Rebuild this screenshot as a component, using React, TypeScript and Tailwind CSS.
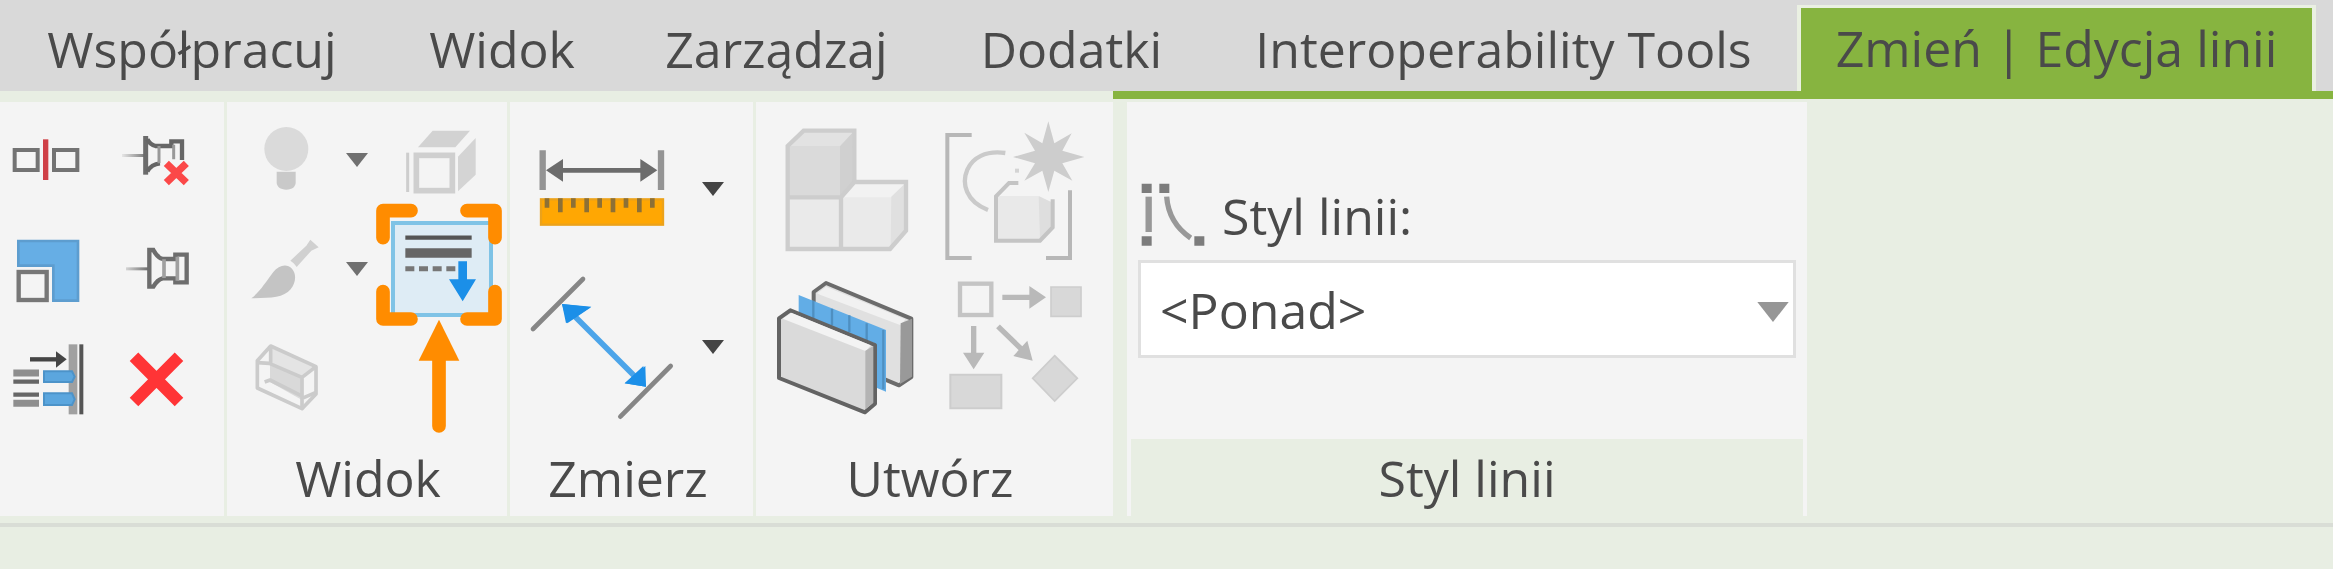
import type { ReactNode } from "react";

const tabs = [
  { name: "Współpracuj", width: "w-[384px]" },
  { name: "Widok", width: "w-[236px]" },
  { name: "Zarządzaj", width: "w-[313px]" },
  { name: "Dodatki", width: "w-[277px]" },
  { name: "Interoperability Tools", width: "w-[587px]" },
];

function Caret({ className }: { className: string }) {
  return (
    <svg viewBox="0 0 22 14" className={className} fill="currentColor" aria-hidden="true">
      <path d="M0 0h22L11 14z" />
    </svg>
  );
}

function Tool({ label, viewBox, size, children }: { label: string; viewBox: string; size: string; children: ReactNode }) {
  return (
    <button type="button" aria-label={label} className={size}>
      <svg viewBox={viewBox} className="h-full w-full" fill="none" aria-hidden="true">
        {children}
      </svg>
    </button>
  );
}

function MenuButton({ label, color }: { label: string; color: string }) {
  return (
    <button type="button" aria-label={label} className={`flex h-14 items-center justify-center ${color}`}>
      <Caret className="h-[14px] w-[22px]" />
    </button>
  );
}

function Panel({ title, className, children }: { title?: string; className: string; children: ReactNode }) {
  return (
    <section className={`flex flex-col justify-between bg-[#f4f4f4] ${className}`}>
      {children}
      <h2 className="flex h-[77px] items-center justify-center">{title}</h2>
    </section>
  );
}

function ModifyPanel() {
  return (
    <Panel className="border-r-3 border-[#e8eee3] pl-[6px] pr-[26px]">
      <div className="grid grid-cols-2 gap-x-6 gap-y-[25px] pt-4">
        <Tool label="Podziel" viewBox="18 24 252 252" size="size-[84px]">
          <rect x="44" y="120" width="69" height="60" stroke="#737373" strokeWidth="12" />
          <rect x="162" y="120" width="70" height="60" stroke="#737373" strokeWidth="12" />
          <path d="M137 88v122" stroke="#cf4046" strokeWidth="16" />
        </Tool>
        <Tool label="Odepnij" viewBox="342 24 252 252" size="size-[84px]">
          <defs>
            <linearGradient id="pin-needle" x1="366" x2="450" y1="0" y2="0" gradientUnits="userSpaceOnUse">
              <stop offset="0" stopColor="#666" stopOpacity="0.1" />
              <stop offset="1" stopColor="#666" />
            </linearGradient>
          </defs>
          <path d="M366 132h66v9h-66z" fill="url(#pin-needle)" />
          <path d="M437 78v116" stroke="#6b6b6b" strokeWidth="15" />
          <path d="M442 88c6 12 14 18 24 20h48V94h32v56M442 184c8-14 18-22 38-24" stroke="#666" strokeWidth="13" />
          <path d="M477 108v52M521 104v44" stroke="#999" strokeWidth="9" />
          <path d="M499 160l60 58M559 160l-60 58" stroke="#fb4848" strokeWidth="22" />
        </Tool>
        <Tool label="Skala" viewBox="18 351 252 252" size="size-[84px]">
          <path d="M55 393h179v179h-74V467H55z" fill="#66aee5" stroke="#5d9dcf" strokeWidth="8" />
          <rect x="56" y="486" width="84" height="84" stroke="#777" strokeWidth="13" />
        </Tool>
        <Tool label="Przypnij" viewBox="342 351 252 252" size="size-[84px]">
          <path d="M378 472h70v9h-70z" fill="url(#pin-needle)" />
          <path d="M448 420v110h12c8-14 16-22 28-25h38v12h34V434h-34v13h-38c-12-3-20-12-28-27z" stroke="#6d6d6d" strokeWidth="13" />
          <path d="M492 448v56M532 440v72" stroke="#a0a0a0" strokeWidth="11" />
        </Tool>
        <Tool label="Utnij/Wydłuż" viewBox="18 678 252 252" size="size-[84px]">
          <path d="M90 748h84" stroke="#454545" strokeWidth="13" />
          <path d="M168 724l32 24-32 25z" fill="#454545" />
          <path d="M206 703h26v210h-26z" fill="#a0a0a0" />
          <path d="M244 703v210" stroke="#555" strokeWidth="12" />
          <path d="M40 789h77M40 880h77" stroke="#8e8e8e" strokeWidth="21" />
          <path d="M40 815h77M40 854h77" stroke="#666" strokeWidth="13" />
          <path d="M132 784h84l8 16-8 16h-84zM132 850h84l8 18-8 17h-84z" fill="#5ba6de" stroke="#4c93c9" strokeWidth="6" />
        </Tool>
        <Tool label="Usuń" viewBox="342 678 252 252" size="size-[84px]">
          <path d="M402 740l135 136M537 740L402 876" stroke="#ff3436" strokeWidth="36" />
        </Tool>
      </div>
    </Panel>
  );
}

function HighlightMarks() {
  return (
    <svg
      viewBox="468 342 378 693"
      className="pointer-events-none absolute -left-[19px] -top-[22px] h-[231px] w-[126px] max-w-none"
      fill="none"
      aria-hidden="true"
    >
      <g stroke="#ff8c00" strokeWidth="41" strokeLinecap="round" strokeLinejoin="round">
        <path d="M489 446v-81h84M741 365h84v81M489 608v82h84M741 690h84v-82M657 800v211" />
      </g>
      <path d="M657 692l61 123H596z" fill="#ff8c00" />
    </svg>
  );
}

function ViewPanel() {
  return (
    <Panel title="Widok" className="border-r-3 border-[#e8eee3] pl-4 pr-[14px]">
      <div className="grid auto-rows-[84px] grid-cols-[84px_28px_106px] items-center gap-x-4 gap-y-[25px] pt-4">
        <Tool label="Ukryj w widoku" viewBox="69 84 252 252" size="size-[84px]">
          <circle cx="199" cy="177" r="66" fill="#dadada" />
          <path d="M170 245h57v32c0 14-10 22-28 22s-29-8-29-22z" fill="#c9c9c9" />
        </Tool>
        <MenuButton label="Opcje ukrywania" color="text-[#707070]" />
        <Tool label="Bryła wyboru" viewBox="513 84 306 252" size="h-[84px] w-[102px] justify-self-end">
          <path d="M563 188v118" stroke="#cdcdcd" strokeWidth="9" />
          <rect x="589" y="196" width="108" height="106" stroke="#cfcfcf" strokeWidth="17" />
          <path d="M594 172l44-50h112l-44 50z" fill="#d2d2d2" />
          <path d="M714 200l53-56v110l-53 50z" fill="#d4d4d4" />
        </Tool>

        <Tool label="Zastąp grafikę" viewBox="69 411 252 252" size="size-[84px]">
          <path d="M94 625c26-20 44-50 66-79 16-20 40-26 56-10 14 16 12 42-4 62-22 26-60 26-118 27z" fill="#c4c4c4" />
          <path d="M211 512l48-45 12-18 25 23-22 10-44 49c-6-10-12-14-19-19z" fill="#d0d0d0" />
        </Tool>
        <MenuButton label="Opcje grafiki" color="text-[#707070]" />
        <button
          type="button"
          aria-label="Grubość linii"
          aria-pressed="true"
          className="relative h-[96px] w-[102px] justify-self-end border-4 border-[#7fc3e6] bg-[#deecf5]"
        >
          <svg viewBox="525 405 282 264" className="h-full w-full" fill="none" aria-hidden="true">
            <path d="M556 443h199" stroke="#555" strokeWidth="13" />
            <path d="M556 489h199" stroke="#666" strokeWidth="28" />
            <path d="M556 536h150" stroke="#777" strokeWidth="15" strokeDasharray="27 14" />
            <path d="M715 514h26v54h27l-40 66-41-66h28z" fill="#1b8fe8" />
          </svg>
          <HighlightMarks />
        </button>

        <Tool label="Przekrój 3D" viewBox="69 738 252 252" size="size-[84px]">
          <path d="M150 800l96 58v72l-96-54z" fill="#d9d9d9" />
          <path d="M152 768l136 62-42 32-94-42z" fill="#e4e4e4" />
          <g stroke="#cbcbcb" strokeWidth="11" strokeLinejoin="round">
            <path d="M152 768l136 62v82l-42 44-134-62v-82z" />
            <path d="M112 818l36 2 98 42 42-32M152 768v52M246 862v94M134 876l16-6 92 46M246 925l42-18" />
          </g>
        </Tool>
      </div>
    </Panel>
  );
}

function MeasurePanel() {
  return (
    <Panel title="Zmierz" className="border-r-3 border-[#e8eee3] pl-[17px] pr-6">
      <div className="grid grid-cols-[150px_32px] items-center gap-x-5 gap-y-2 pt-3">
        <Tool label="Zmierz odległość" viewBox="81 72 450 450" size="size-[150px]">
          <path d="M128 181v119M483 181v119" stroke="#949494" strokeWidth="19" />
          <path d="M170 241h270" stroke="#6c6c6c" strokeWidth="14" />
          <path d="M138 241l51-34v68zM472 241l-51-34v68z" fill="#6c6c6c" />
          <rect x="123" y="328" width="366" height="76" fill="#ffa703" stroke="#eca21a" strokeWidth="7" />
          <path d="M141 325v28M220 325v28M299 325v28M378 325v28M457 325v28" stroke="#8d7036" strokeWidth="14" />
          <path d="M181 325v42M260 325v42M339 325v42M418 325v42" stroke="#8d7036" strokeWidth="14" />
        </Tool>
        <MenuButton label="Opcje pomiaru" color="text-[#444]" />
        <Tool label="Wymiar wyrównany" viewBox="81 546 450 450" size="size-[150px]">
          <path d="M99 717l150-150M361 980l151-152" stroke="#868686" strokeWidth="14" strokeLinecap="round" />
          <path d="M215 670l195 195" stroke="#4ba4e9" strokeWidth="17" />
          <path d="M186 642l87 10-71 48zM438 890l-64-10 62-52z" fill="#1b8fe8" />
          <path d="M186 642l12 58 76-50zM438 890l-8-62-56 52z" fill="#1b8fe8" />
        </Tool>
        <MenuButton label="Opcje wymiaru" color="text-[#444]" />
      </div>
    </Panel>
  );
}

function CreatePanel() {
  return (
    <Panel title="Utwórz" className="pl-[15px] pr-6">
      <div className="grid grid-cols-2 gap-x-[18px] gap-y-2 pt-3">
        <Tool label="Utwórz części" viewBox="33 12 450 450" size="size-[150px]">
          <path d="M83 108l48-46h152v154h155v146l-48 55H83z" fill="#eaeaea" />
          <path d="M83 108h158v154H83z" fill="#dadada" />
          <path d="M83 108l48-46h152l-44 46z" fill="#e2e2e2" />
          <path d="M240 108l43-46v154l-43 46z" fill="#d0d0d0" />
          <path d="M245 262l44-44h149l-44 44z" fill="#f2f2f2" />
          <path d="M394 260l44-42v144l-46 52z" fill="#e0e0e0" />
          <path d="M83 108l48-46h152v154h155v146l-48 55H83zM83 262h160v155M243 262l40-46" stroke="#cdcdcd" strokeWidth="13" />
        </Tool>
        <Tool label="Utwórz grupę" viewBox="537 12 450 450" size="size-[150px]">
          <path d="M635 75h-73v369h73M858 444h72V241" stroke="#b7b7b7" strokeWidth="12" />
          <path d="M736 129c-60-8-98 14-114 50-18 42-4 96 62 121" stroke="#cacaca" strokeWidth="13" />
          <path d="M765 182h12" stroke="#d4d4d4" strokeWidth="12" />
          <path d="M708 258h126l42 20v74l-36 40H708z" fill="#e9e9e9" />
          <path d="M836 258l42 20v74l-38 34z" fill="#dedede" />
          <path d="M775 219h-28l-39 40v133h132l38-40v-84" stroke="#c4c4c4" strokeWidth="12" />
          <path d="M865 34l18 66 52-30-28 52 66 19-66 19 30 52-54-30-18 64-18-64-54 30 32-52-66-19 66-19-32-54 54 32z" fill="#cdcdcd" />
        </Tool>
        <Tool label="Utwórz zespół" viewBox="33 486 450 450" size="size-[150px]">
          <path d="M161 546l37-27 256 107v175l-37 25-256-107z" fill="#e0e0e0" stroke="#6b6b6b" strokeWidth="12" strokeLinejoin="round" />
          <path d="M172 550l26-20 238 98-14 18-242-92z" fill="#f1f1f1" />
          <path d="M422 640l34-14v174l-36 22z" fill="#999" />
          <path d="M116 555l262 105v185l-34-14V700L116 608z" fill="#62ade6" />
          <path d="M160 572v52M216 596v50M268 616v50M320 640v50M370 660v178" stroke="#4e8fc1" strokeWidth="7" />
          <path d="M57 625l34-24 254 104v176l-30 26L57 804z" fill="#dadada" stroke="#636363" strokeWidth="12" strokeLinejoin="round" />
          <path d="M68 626l26-18 238 98-14 18z" fill="#f3f3f3" />
          <path d="M316 722l24-14v170l-24 20z" fill="#b4b4b4" />
        </Tool>
        <Tool label="Utwórz podobne" viewBox="537 486 450 450" size="size-[150px]">
          <rect x="600" y="521" width="94" height="94" stroke="#c4c4c4" strokeWidth="13" />
          <path d="M873 531h90v88h-90z" fill="#d8d8d8" stroke="#cdcdcd" strokeWidth="5" />
          <path d="M571 794h153v101H571z" fill="#d8d8d8" stroke="#cdcdcd" strokeWidth="6" />
          <path d="M884 737l68 68-68 68-66-68z" fill="#d8d8d8" stroke="#cdcdcd" strokeWidth="5" />
          <path d="M727 562h86M641 648v86M714 649l76 74" stroke="#b9b9b9" strokeWidth="16" />
          <path d="M808 528l50 34-50 34zM609 728h64l-32 50zM818 752l-58-14 42-46z" fill="#b9b9b9" />
        </Tool>
      </div>
    </Panel>
  );
}

function LineStylePanel() {
  return (
    <section className="flex w-[680px] flex-col justify-between border-x-4 border-[#f4f4f4] bg-[#f4f4f4]">
      <div className="flex flex-col gap-1 px-[7px] pt-[74px]">
        <div className="flex h-20 items-center gap-[14px]">
          <svg viewBox="114 303 210 210" className="size-[70px]" fill="none" aria-hidden="true">
            <path d="M125 311h30v28h-30zM178 311h30v28h-30zM125 469h30v28h-30zM283 469h30v28h-30z" fill="#7c7c7c" />
            <path d="M146 350v106" stroke="#989898" strokeWidth="19" />
            <path d="M200 350c4 56 28 94 72 124" stroke="#989898" strokeWidth="16" />
          </svg>
          <label htmlFor="line-style">Styl linii:</label>
        </div>
        <div className="relative">
          <select
            id="line-style"
            defaultValue="above"
            className="h-[98px] w-full appearance-none border-3 border-[#e0e0e0] bg-white pl-[19px] pr-16 pt-[2px]"
          >
            <option value="above">&lt;Ponad&gt;</option>
          </select>
          <Caret className="pointer-events-none absolute right-[6px] top-[42px] h-[20px] w-[34px] text-[#969696]" />
        </div>
      </div>
      <h2 className="flex h-[77px] items-center justify-center bg-[#e8eee3]">Styl linii</h2>
    </section>
  );
}

export default function App() {
  return (
    <div className="min-h-screen bg-white pr-[9px] font-['Open_Sans',sans-serif] text-[50px] leading-[68px] text-[#4a4a4a]">
      <div className="flex min-h-screen flex-col bg-[#e8eee3]">
        <nav className="flex h-[91px] bg-[#d9d9d9]">
          {tabs.map((tab) => (
            <button key={tab.name} type="button" className={`whitespace-nowrap pt-[6px] ${tab.width}`}>
              {tab.name}
            </button>
          ))}
          <button
            type="button"
            aria-current="page"
            className="mt-[5px] w-[519px] whitespace-nowrap border-x-4 border-t-3 border-[#eaf0e2] bg-[#87b440] pb-[3px]"
          >
            Zmień | Edycja linii
          </button>
        </nav>

        <div className="flex">
          <div className="flex h-[425px] pt-[11px]">
            <ModifyPanel />
            <ViewPanel />
            <MeasurePanel />
            <CreatePanel />
          </div>
          {/* Contextual part of the ribbon, marked by the green rule */}
          <div className="flex flex-1 border-t-8 border-[#87b440] pl-[14px] pt-[3px]">
            <LineStylePanel />
          </div>
        </div>
        <div className="mt-[7px] h-1 bg-[#d9ddd6]" />
      </div>
    </div>
  );
}
